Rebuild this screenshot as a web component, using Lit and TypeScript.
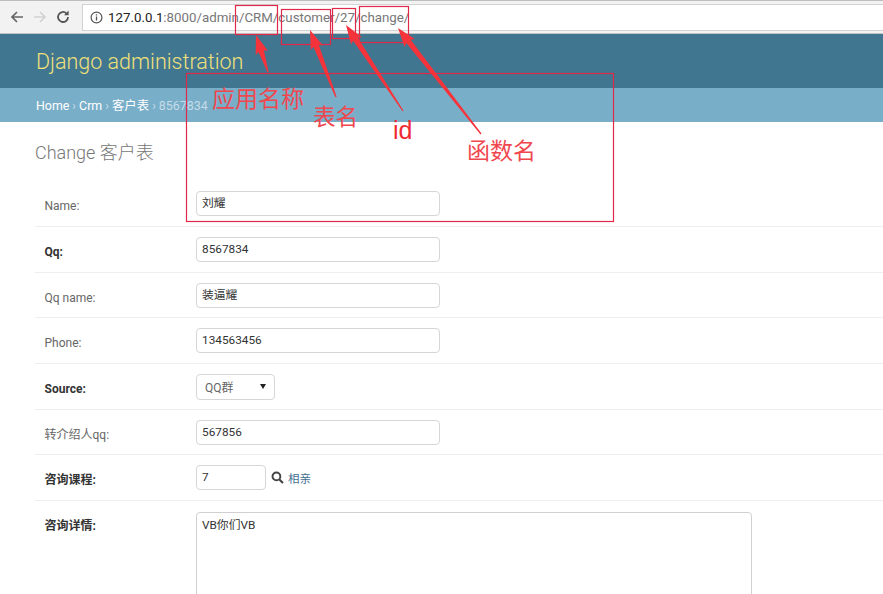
import { LitElement, html, css, svg } from "lit";
import { customElement } from "lit/decorators.js";

const arrow = (tx: number, ty: number, bx: number, by: number) => {
  const dx = bx - tx, dy = by - ty, l = Math.hypot(dx, dy);
  const ux = dx / l, uy = dy / l, nx = -uy, ny = ux;
  const p = (a: number, n: number) => `${(tx + ux * a + nx * n).toFixed(1)},${(ty + uy * a + ny * n).toFixed(1)}`;
  return svg`<polygon points="${p(0, 0)} ${p(19, 6.5)} ${p(17, 2.8)} ${p(l, 0.6)} ${p(l, -0.6)} ${p(17, -2.8)} ${p(19, -6.5)}" fill="#f5333b" />`;
};

const box = (x: number, y: number, w: number, h: number) =>
  svg`<rect x="${x}" y="${y}" width="${w}" height="${h}" fill="none" stroke="#e0284a" stroke-width="1.2" />`;

const rows: { label: string; cls: string; kind: string; value: string }[] = [
  { label: "Name:", cls: "", kind: "input", value: "刘耀" },
  { label: "Qq:", cls: "req", kind: "input", value: "8567834" },
  { label: "Qq name:", cls: "", kind: "input", value: "装逼耀" },
  { label: "Phone:", cls: "", kind: "input", value: "134563456" },
  { label: "Source:", cls: "req", kind: "select", value: "QQ群" },
  { label: "转介绍人qq:", cls: "", kind: "input", value: "567856" },
  { label: "咨询课程:", cls: "req", kind: "fk", value: "7" },
];

@customElement("app-root")
export class AppRoot extends LitElement {
  static styles = css`
    :host {
      display: block;
      position: relative;
      width: 883px;
      height: 594px;
      overflow: hidden;
      background: #fff;
      font-family: Roboto, "Noto Sans CJK SC", sans-serif;
      color: #333;
    }
    .toolbar {
      box-sizing: border-box;
      height: 34px;
      display: flex;
      align-items: center;
      background: #f2f2f2;
      border-top: 1px solid #bdbdbd;
      border-bottom: 1px solid #c4c4c4;
      padding-left: 9px;
    }
    .nav { display: flex; gap: 7px; align-items: center; width: 73px; flex: none; }
    .nav svg { width: 16px; height: 16px; display: block; }
    .url {
      flex: 1;
      height: 25px;
      background: #fff;
      border: 1px solid #d3d3d3;
      border-right: none;
      display: flex;
      align-items: center;
      font-size: 13.3px;
      color: #777;
      white-space: pre;
      padding-left: 7px;
      gap: 5px;
    }
    .url b { font-weight: 400; color: #222; }
    .url svg { width: 13px; height: 13px; flex: none; }
    .header {
      height: 54px;
      background: #417690;
      display: flex;
      align-items: center;
      padding-left: 36px;
      box-sizing: border-box;
      font-size: 21.5px;
      font-weight: 300;
      color: #f0e07a;
    }
    .crumbs {
      height: 34px;
      background: #79aec8;
      display: flex;
      align-items: center;
      padding-left: 36px;
      font-size: 12.4px;
      color: #c4dce8;
      gap: 3px;
      white-space: pre;
    }
    .crumbs a { color: #fff; }
    .content { padding: 19px 0 0 35px; }
    h1 {
      margin: 0 0 16.3px;
      font-size: 18px;
      line-height: 24px;
      font-weight: 300;
      color: #777;
    }
    .row {
      box-sizing: border-box;
      height: 45.67px;
      display: flex;
      align-items: flex-start;
      padding: 10px 0 0 9.5px;
      border-bottom: 1px solid #eee;
    }
    .row label {
      width: 151.5px;
      flex: none;
      font-size: 12px;
      line-height: 24px;
      padding-top: 3px;
      color: #666;
    }
    .row label.req { font-weight: 700; color: #333; }
    .field {
      box-sizing: border-box;
      height: 25px;
      width: 244px;
      border: 1px solid #d6d6d6;
      border-radius: 4px;
      padding: 0 5px;
      font-size: 11.8px;
      line-height: 23px;
      color: #333;
      background: #fff;
    }
    .select {
      box-sizing: border-box;
      width: 79px;
      height: 26px;
      border: 1px solid #d6d6d6;
      border-radius: 4px;
      display: flex;
      align-items: center;
      justify-content: space-between;
      padding: 0 8px 0 8px;
      font-size: 12px;
      color: #666;
    }
    .caret { width: 0; height: 0; border: 3px solid transparent; border-top: 5px solid #222; border-bottom: none; }
    .fk { display: flex; align-items: center; }
    .fk .field { width: 70px; }
    .fk svg { width: 13px; height: 13px; margin-left: 5px; }
    .fk a { margin-left: 4px; font-size: 11.5px; color: #3f7090; }
    .area-row { display: flex; padding: 11px 0 0 9.5px; }
    .area-row label { width: 151.5px; flex: none; padding-top: 2px; font-size: 12px; line-height: 24px; font-weight: 700; color: #333; }
    .area {
      box-sizing: border-box;
      width: 556px;
      height: 160px;
      border: 1px solid #d0d0d0;
      border-radius: 4px;
      padding: 2px 5px;
      font-size: 11.8px;
      line-height: 20px;
      color: #333;
    }
    .overlay { position: absolute; left: 0; top: 0; width: 883px; height: 594px; pointer-events: none; }
    .note {
      position: absolute;
      color: #f0474f;
      font-family: "Noto Sans CJK SC", sans-serif;
      white-space: nowrap;
      line-height: 1;
    }
    .n1 { left: 212px; top: 86px; font-size: 23px; }
    .n2 { left: 313px; top: 104px; font-size: 22.5px; }
    .n3 { left: 393px; top: 118px; font-size: 25px; font-family: "Liberation Sans", sans-serif; color: #f02a33; }
    .n4 { left: 467px; top: 138px; font-size: 23px; }
  `;

  render() {
    return html`
      <div class="toolbar">
        <div class="nav">
          <svg viewBox="0 0 16 16"><path d="M14 8H3M8 3L3 8l5 5" fill="none" stroke="#666" stroke-width="1.7" /></svg>
          <svg viewBox="0 0 16 16"><path d="M2 8h11M8 3l5 5-5 5" fill="none" stroke="#d2d2d2" stroke-width="1.7" /></svg>
          <svg viewBox="0 0 16 16"><path d="M13 8a5 5 0 1 1-1.6-3.7" fill="none" stroke="#555" stroke-width="1.8" /><path d="M13.6 1.6v4.6H9z" fill="#555" /></svg>
        </div>
        <div class="url">
          <svg viewBox="0 0 13 13"><circle cx="6.5" cy="6.5" r="5.4" fill="none" stroke="#555" stroke-width="1.2" /><path d="M6.5 5.6v4M6.5 3.2v1.3" stroke="#555" stroke-width="1.3" /></svg>
          <span><b>127.0.0.1</b>:8000/admin/CRM/customer/27/change/</span>
        </div>
      </div>
      <div class="header">Django administration</div>
      <div class="crumbs"><a>Home</a><span>›</span><a>Crm</a><span>›</span><a>客户表</a><span>›</span><span>8567834</span></div>
      <div class="content">
        <h1>Change 客户表</h1>
        ${rows.map(
          (r) => html`<div class="row">
            <label class="${r.cls}">${r.label}</label>
            ${r.kind === "input"
              ? html`<div class="field">${r.value}</div>`
              : r.kind === "select"
              ? html`<div class="select"><span>${r.value}</span><span class="caret"></span></div>`
              : html`<div class="fk">
                  <div class="field">${r.value}</div>
                  <svg viewBox="0 0 12 12"><circle cx="5" cy="5" r="3.6" fill="none" stroke="#444" stroke-width="1.8" /><path d="M7.8 7.8L11 11" stroke="#444" stroke-width="2" /></svg>
                  <a>相亲</a>
                </div>`}
          </div>`
        )}
        <div class="area-row"><label>咨询详情:</label><div class="area">VB你们VB</div></div>
      </div>
      <svg class="overlay" viewBox="0 0 883 594">
        ${box(235.5, 5.5, 42, 29)} ${box(281.5, 9.5, 49, 35)} ${box(332.5, 8.5, 23, 30)} ${box(359.5, 6.5, 49, 36)} ${box(186.5, 73.5, 427, 148)}
        ${arrow(256, 35, 268, 72)} ${arrow(310, 30, 336, 97)} ${arrow(346, 25, 403, 111)} ${arrow(398, 28, 481, 134)}
      </svg>
      <span class="note n1">应用名称</span>
      <span class="note n2">表名</span>
      <span class="note n3">id</span>
      <span class="note n4">函数名</span>
    `;
  }
}
